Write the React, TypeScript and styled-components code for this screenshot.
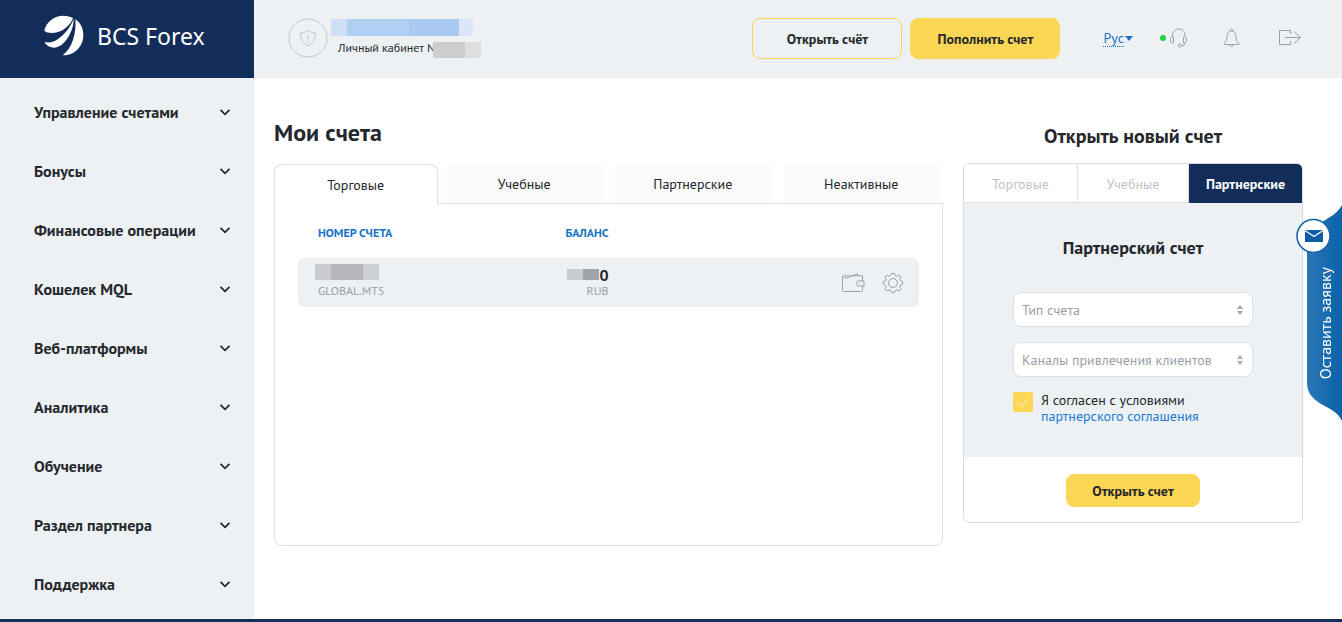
import React from "react";
import styled, { createGlobalStyle, css } from "styled-components";

const navy = "#122d5a";
const panel = "#edf1f4";
const yellow = "#fcd655";
const ink = "#25282c";
const link = "#1873c8";
const line = "#dde1e4";
const muted = "#9a9fa6";

const GlobalStyle = createGlobalStyle`
  *, *::before, *::after { box-sizing: border-box; }
  body {
    margin: 0;
    background: #fff;
    color: ${ink};
    font-family: "PT Sans", "Noto Sans", "Open Sans", sans-serif;
    font-size: 14px;
    line-height: 16px;
  }
  button, select, input { font: inherit; color: inherit; }
  h1, h2, h3, p, ul { margin: 0; padding: 0; }
  a { text-decoration: none; }
`;

const Page = styled.div`
  display: grid;
  grid-template-columns: 254px minmax(0, 1fr);
  grid-template-rows: 78px 1fr;
  min-height: 100vh;
  border-bottom: 3px solid #14305a;
`;

const Brand = styled.a`
  display: flex;
  align-items: center;
  gap: 13px;
  padding: 0 0 7px 44px;
  background: ${navy};
  color: #fff;
`;

const BrandName = styled.span`
  font-family: "Noto Sans", sans-serif;
  font-size: 23px;
  line-height: 28px;
  white-space: nowrap;
`;

const Header = styled.header`
  display: flex;
  align-items: center;
  padding: 0 40px 2px 34px;
  background: ${panel};
`;

const Account = styled.div`
  display: flex;
  align-items: center;
  gap: 3px;
  margin-right: auto;
`;

const AccountText = styled.div`
  display: flex;
  flex-direction: column;
  gap: 6px;
`;

const AccountLine = styled.div`
  display: flex;
  align-items: flex-start;
  padding-left: 7px;
  font-size: 12px;
  line-height: 12px;
  white-space: nowrap;

  > span { margin-left: -2px; }
`;

const Mask = styled.span<{ $w: number; $h: number; $fill: string }>`
  display: block;
  width: ${(p) => p.$w}px;
  height: ${(p) => p.$h}px;
  background: ${(p) => p.$fill};
`;

const HeaderButtons = styled.div`
  display: flex;
  gap: 8px;
  margin-right: 43px;
`;

const Button = styled.button<{ $outline?: boolean; $small?: boolean }>`
  width: ${(p) => (p.$small ? 134 : 150)}px;
  height: ${(p) => (p.$small ? 33 : 41)}px;
  padding: ${(p) => (p.$small ? 0 : 2)}px 0 0;
  border: 1px solid ${yellow};
  border-radius: 8px;
  background: ${(p) => (p.$outline ? "transparent" : yellow)};
  font-weight: 700;
  cursor: pointer;
`;

const Tools = styled.div`
  display: flex;
  align-items: center;
`;

const Language = styled.button`
  display: flex;
  align-items: center;
  gap: 1px;
  padding: 0;
  border: 0;
  background: none;
  color: ${link};
  margin-right: 27px;
  cursor: pointer;

  span { border-bottom: 1px dotted ${link}; }
`;

const ToolButton = styled.button<{ $gap?: number }>`
  display: flex;
  align-items: center;
  padding: 0;
  margin-right: ${(p) => p.$gap ?? 0}px;
  border: 0;
  background: none;
  color: #98a1ab;
  cursor: pointer;
`;

const OnlineDot = styled.i`
  width: 6px;
  height: 6px;
  margin-right: 3px;
  border-radius: 50%;
  background: #22d044;
`;

const Sidebar = styled.nav`
  background: ${panel};
  padding: 4px 0;
`;

const Menu = styled.ul`
  list-style: none;
`;

const MenuButton = styled.button`
  display: flex;
  align-items: center;
  justify-content: space-between;
  width: 100%;
  height: 59px;
  padding: 0 23px 0 34px;
  border: 0;
  background: none;
  font-size: 16px;
  font-weight: 700;
  text-align: left;
  cursor: pointer;
`;

const Main = styled.main`
  display: grid;
  grid-template-columns: minmax(0, 1fr) 340px;
  align-items: start;
  gap: 20px;
  padding: 39px 39px 20px 20px;
`;

const PageTitle = styled.h1`
  height: 47px;
  font-size: 24px;
  line-height: 32px;
`;

const AccountTabs = styled.div`
  display: grid;
  grid-template-columns: repeat(4, minmax(0, 1fr));
  gap: 5px;
`;

const AccountTab = styled.button<{ $active?: boolean }>`
  height: 39px;
  padding: 0;
  border: 1px solid transparent;
  border-bottom: 0;
  border-radius: 8px 8px 0 0;
  background: linear-gradient(90deg, #fff 1%, #fafafa 3%, #fafafa 97%, #fff 99%);
  cursor: pointer;
  ${(p) =>
    p.$active &&
    css`
      position: relative;
      height: 40px;
      margin-bottom: -1px;
      border-color: ${line};
      background: #fff;
    `}
`;

const AccountsPanel = styled.div`
  min-height: 343px;
  padding: 0 23px;
  border: 1px solid ${line};
  border-radius: 0 0 8px 8px;
`;

const AccountsTable = styled.table`
  width: 100%;
  border-collapse: separate;
  border-spacing: 0;
  table-layout: fixed;
`;

const HeadCell = styled.th<{ $right?: boolean }>`
  height: 54px;
  padding: 3px 0 0 ${(p) => (p.$right ? 0 : 20)}px;
  color: ${link};
  font-size: 12px;
  text-align: ${(p) => (p.$right ? "right" : "left")};
`;

const Cell = styled.td<{ $first?: boolean; $last?: boolean; $right?: boolean }>`
  height: 49px;
  padding: 0 ${(p) => (p.$last ? 15 : 0)}px 0 ${(p) => (p.$first ? 17 : 0)}px;
  border-radius: ${(p) => (p.$first ? "6px 0 0 6px" : p.$last ? "0 6px 6px 0" : "0")};
  background: ${panel};
  text-align: ${(p) => (p.$right ? "right" : "left")};
`;

const AccountNumber = styled.div`
  display: grid;
  gap: 3px;
  padding-bottom: 2px;
`;

const Amount = styled.div`
  display: flex;
  align-items: center;
  justify-content: flex-end;
  font-size: 16px;
  font-weight: 700;
`;

const Note = styled.div<{ $indent?: boolean }>`
  padding-left: ${(p) => (p.$indent ? 3 : 0)}px;
  color: ${muted};
  font-size: 12px;
`;

const RowActions = styled.div`
  display: flex;
  justify-content: flex-end;
  gap: 17px;
`;

const AsideTitle = styled.h2`
  height: 46px;
  padding-top: 3px;
  font-size: 20px;
  line-height: 32px;
  text-align: center;
`;

const FormCard = styled.form`
  overflow: hidden;
  border: 1px solid #d6dde2;
  border-radius: 6px;
`;

const FormTabs = styled.div`
  display: grid;
  grid-template-columns: 114px 111px 1fr;
  margin: -1px -1px 0 0;
`;

const FormTab = styled.button<{ $active?: boolean }>`
  height: 40px;
  padding: 1px 0 0;
  border: 0;
  border-top: 1px solid #d6dde2;
  border-right: 1px solid ${line};
  border-bottom: 1px solid ${line};
  background: #fff;
  color: #bfc4c9;
  cursor: pointer;
  ${(p) =>
    p.$active &&
    css`
      border-color: ${navy};
      background: ${navy};
      color: #fff;
      font-weight: 700;
    `}
`;

const FormBody = styled.div`
  display: flex;
  flex-direction: column;
  gap: 15px;
  height: 254px;
  padding: 33px 49px 0;
  background: ${panel};
`;

const FormTitle = styled.h3`
  margin-bottom: 17px;
  font-size: 18px;
  line-height: 24px;
  text-align: center;
`;

const SelectBox = styled.label`
  display: grid;
  align-items: center;

  select, svg { grid-area: 1 / 1; }
  svg { justify-self: end; margin-right: 10px; pointer-events: none; }
`;

const Select = styled.select`
  appearance: none;
  width: 100%;
  height: 35px;
  padding: 1px 24px 0 8px;
  border: 1px solid ${line};
  border-radius: 8px;
  background: #fff;
  color: ${muted};
`;

const Agreement = styled.div`
  display: flex;
  gap: 8px;
`;

const AgreementLabel = styled.label`
  display: block;
`;

const CheckWrap = styled.span`
  display: grid;
  height: 20px;

  input, svg { grid-area: 1 / 1; }
  svg { pointer-events: none; }
`;

const Check = styled.input`
  appearance: none;
  width: 20px;
  height: 20px;
  margin: 0;
  border-radius: 2px;
  background: ${yellow};
`;

const AgreementLink = styled.a`
  display: block;
  color: #1d7ad6;
`;

const FormFooter = styled.div`
  display: flex;
  justify-content: center;
  padding: 17px 0 15px;
`;

const Request = styled.button`
  position: fixed;
  top: 205px;
  right: 0;
  width: 46px;
  height: 216px;
  padding: 0;
  border: 0;
  background: none;
  color: #fff;
  cursor: pointer;

  svg { display: block; }
`;

const RequestLabel = styled.span`
  position: absolute;
  top: 62px;
  right: 7px;
  writing-mode: vertical-rl;
  transform: rotate(180deg);
  font-size: 16px;
  line-height: 20px;
  white-space: nowrap;
`;

const Logo = () => (
  <svg width="40" height="41" viewBox="0 0 120 123" fill="#fff" aria-hidden="true">
    <path d="M1 47C8 18 32 2 58 2c12 0 22 3 29 7C82 24 66 44 42 51 24 56 8 54 1 47z" />
    <path d="M89 12C90 42 66 95 32 98 17 98 6 91 2 81c12 3 25 1 37-7 22-14 38-34 50-62z" />
    <path d="M94 13c15 9 24 27 24 47 0 35-27 62-62 61C82 102 98 60 94 13z" />
  </svg>
);

const Shield = () => (
  <svg width="40" height="40" viewBox="0 0 40 40" fill="none" stroke="#c3c6c9" aria-hidden="true">
    <circle cx="20" cy="20" r="19" />
    <path d="M20 12.500c-2 1.700-4.500 2.300-7.500 2.300 0 6 2 10.200 7.500 13 5.500-2.800 7.500-7 7.500-13-3 0-5.500-.6-7.500-2.300z" />
    <path d="M20 16.500v5.500M20 23.500v1" />
  </svg>
);

const Chevron = () => (
  <svg width="12" height="8" viewBox="0 0 12 8" fill="none" stroke={ink} strokeWidth="1.8" aria-hidden="true">
    <path d="M1.500 1.800L6 6.300l4.500-4.500" />
  </svg>
);

const Headset = () => (
  <svg width="20" height="20" viewBox="0 0 20 20" fill="none" stroke="currentColor" aria-hidden="true">
    <path d="M3.500 9V7.500C3.500 3.500 6 1 9.800 1S16 3.500 16 7.500V9" />
    <path d="M4.500 9v6h-1C2 15 1.500 13.700 1.500 12S2 9 3.500 9zM14.500 9v6h1c1.500 0 2-1.300 2-3s-.5-3-2-3z" />
    <path d="M16 15c0 2-1.500 2.700-3.500 2.700" />
    <circle cx="10.800" cy="17.500" r="1.700" />
  </svg>
);

const Bell = () => (
  <svg width="17" height="20" viewBox="0 0 17 20" fill="none" stroke="currentColor" aria-hidden="true">
    <path d="M8.500 3C5.500 3 4 5.500 4 8.500c0 4-1 5-2.800 6.500v1.500h14.600V15C14 13.500 13 12.500 13 8.500 13 5.500 11.500 3 8.500 3z" />
    <path d="M7.200 3c-.5-2.500 3.100-2.500 2.600 0M6.500 16.500c0 2.700 4 2.700 4 0" />
  </svg>
);

const Exit = () => (
  <svg width="24" height="16" viewBox="0 0 24 16" fill="none" stroke="currentColor" aria-hidden="true">
    <path d="M12.500 4V.500h-11v14h11V11M7 7.500h15M16 1.500l6.500 6-6.500 6" />
  </svg>
);

const Wallet = () => (
  <svg width="23" height="20" viewBox="0 0 23 20" fill="none" stroke="#98a1ad" aria-hidden="true">
    <path d="M20.500 8V2.800H2.200c-1 0-1.700.3-1.700 1.200v13.500c0 .6.400 1 1 1h18c.6 0 1-.4 1-1V13" />
    <path d="M1 3.500C1.500 4.500 3 5 4.500 5L15.500.8l1 1.900" />
    <path d="M22 8h-5.500C15 8 14.500 9 14.500 10.500S15 13 16.500 13H22zM17 10.500h1" />
  </svg>
);

const Gear = () => (
  <svg width="22" height="22" viewBox="0 0 22 22" fill="none" stroke="#98a1ad" aria-hidden="true">
    <circle cx="11" cy="11" r="4.500" />
    <path
      strokeLinejoin="round"
      d="M9.700 1.300h2.600Q12.500 4 14.400 4T17.300 3L19 4.700Q17.500 6.500 18 7.800T20.700 9.700v2.600Q18 12.500 18 14.400T19 17.300L17.300 19Q15.500 17.500 14.200 18T12.300 20.700H9.700Q9.500 18 7.600 18T4.700 19L3 17.300Q4.500 15.500 4 14.200T1.300 12.300V9.700Q4 9.500 4 7.600T3 4.700L4.700 3Q6.500 4.500 7.800 4T9.700 1.300z"
    />
  </svg>
);

const Sort = () => (
  <svg width="6" height="10" viewBox="0 0 6 10" fill="#a7abb0" aria-hidden="true">
    <path d="M0 4l3-4 3 4zM0 6h6l-3 4z" />
  </svg>
);

const Tick = () => (
  <svg width="20" height="20" viewBox="0 0 20 20" fill="none" stroke="#ffe894" strokeWidth="1.500" aria-hidden="true">
    <path d="M4 10.500l4 4 8-8" />
  </svg>
);

const RequestShape = () => (
  <svg width="46" height="216" viewBox="0 0 46 216" aria-hidden="true">
    <defs>
      <linearGradient id="request" x1="0" x2="1">
        <stop offset="0" stopColor="#2a77b8" />
        <stop offset="1" stopColor="#0a62a8" />
      </linearGradient>
    </defs>
    <path fill="url(#request)" d="M46 0C42 8 34 12 26 17 16 22 11 28 11 40V178c0 10 6 16 14 21 9 5 17 8 21 17z" />
    <circle cx="17.500" cy="31" r="16.500" fill="#fff" stroke="#1767a8" strokeWidth="1.600" />
    <path fill="#0f5ea3" d="M9 25h18v12H9z" />
    <path fill="none" stroke="#fff" strokeWidth="1.300" d="M9 25.500l9 6 9-6" />
  </svg>
);

const menu = [
  "Управление счетами",
  "Бонусы",
  "Финансовые операции",
  "Кошелек MQL",
  "Веб-платформы",
  "Аналитика",
  "Обучение",
  "Раздел партнера",
  "Поддержка",
];

const accountTabs = ["Торговые", "Учебные", "Партнерские", "Неактивные"];
const formTabs = ["Торговые", "Учебные", "Партнерские"];

export default function App() {
  return (
    <>
      <GlobalStyle />
      <Page>
        <Brand href="#">
          <Logo />
          <BrandName>BCS Forex</BrandName>
        </Brand>

        <Header>
          <Account>
            <Shield />
            <AccountText>
              <Mask
                $w={142}
                $h={17}
                $fill="linear-gradient(90deg, #cfe0f6 0 16px, #b1cff3 16px 78px, #a9c9f2 78px 128px, #dbe7f6 128px)"
              />
              <AccountLine>
                Личный кабинет N
                <Mask $w={48} $h={16} $fill="linear-gradient(90deg, #cccdcf 0 32px, #dcdee0 32px)" />
              </AccountLine>
            </AccountText>
          </Account>
          <HeaderButtons>
            <Button type="button" $outline>Открыть счёт</Button>
            <Button type="button">Пополнить счет</Button>
          </HeaderButtons>
          <Tools>
            <Language type="button">
              <span>Рус</span>
              <svg width="8" height="5" viewBox="0 0 8 5" fill={link} aria-hidden="true">
                <path d="M0 0h8L4 5z" />
              </svg>
            </Language>
            <ToolButton type="button" aria-label="Чат" $gap={34}>
              <OnlineDot />
              <Headset />
            </ToolButton>
            <ToolButton type="button" aria-label="Уведомления" $gap={38}>
              <Bell />
            </ToolButton>
            <ToolButton type="button" aria-label="Выход">
              <Exit />
            </ToolButton>
          </Tools>
        </Header>

        <Sidebar>
          <Menu>
            {menu.map((item) => (
              <li key={item}>
                <MenuButton type="button">
                  {item}
                  <Chevron />
                </MenuButton>
              </li>
            ))}
          </Menu>
        </Sidebar>

        <Main>
          <section>
            <PageTitle>Мои счета</PageTitle>
            <AccountTabs role="tablist">
              {accountTabs.map((tab, i) => (
                <AccountTab key={tab} type="button" role="tab" aria-selected={i === 0} $active={i === 0}>
                  {tab}
                </AccountTab>
              ))}
            </AccountTabs>
            <AccountsPanel>
              <AccountsTable>
                <thead>
                  <tr>
                    <HeadCell scope="col">НОМЕР СЧЕТА</HeadCell>
                    <HeadCell scope="col" $right>БАЛАНС</HeadCell>
                    <td colSpan={2} />
                  </tr>
                </thead>
                <tbody>
                  <tr>
                    <Cell $first>
                      <AccountNumber>
                        <Mask
                          $w={64}
                          $h={16}
                          $fill="linear-gradient(90deg, #c9cbce 0 16px, #b6b8bc 16px 48px, #cdd0d3 48px)"
                        />
                        <Note $indent>GLOBAL.MT5</Note>
                      </AccountNumber>
                    </Cell>
                    <Cell $right>
                      <Amount>
                        <Mask $w={32} $h={11} $fill="linear-gradient(90deg, #c9cbcf 0 16px, #a0a3aa 16px)" />0
                      </Amount>
                      <Note>RUB</Note>
                    </Cell>
                    <Cell $last colSpan={2}>
                      <RowActions>
                        <ToolButton type="button" aria-label="Кошелек"><Wallet /></ToolButton>
                        <ToolButton type="button" aria-label="Настройки"><Gear /></ToolButton>
                      </RowActions>
                    </Cell>
                  </tr>
                </tbody>
              </AccountsTable>
            </AccountsPanel>
          </section>

          <aside>
            <AsideTitle>Открыть новый счет</AsideTitle>
            <FormCard>
              <FormTabs role="tablist">
                {formTabs.map((tab, i) => (
                  <FormTab key={tab} type="button" role="tab" aria-selected={i === 2} $active={i === 2}>
                    {tab}
                  </FormTab>
                ))}
              </FormTabs>
              <FormBody>
                <FormTitle>Партнерский счет</FormTitle>
                <SelectBox>
                  <Select aria-label="Тип счета">
                    <option>Тип счета</option>
                  </Select>
                  <Sort />
                </SelectBox>
                <SelectBox>
                  <Select aria-label="Каналы привлечения клиентов">
                    <option>Каналы привлечения клиентов</option>
                  </Select>
                  <Sort />
                </SelectBox>
                <Agreement>
                  <CheckWrap>
                    <Check id="agree" type="checkbox" defaultChecked />
                    <Tick />
                  </CheckWrap>
                  <div>
                    <AgreementLabel htmlFor="agree">Я согласен с условиями</AgreementLabel>
                    <AgreementLink href="#">партнерского соглашения</AgreementLink>
                  </div>
                </Agreement>
              </FormBody>
              <FormFooter>
                <Button type="submit" $small>Открыть счет</Button>
              </FormFooter>
            </FormCard>
          </aside>
        </Main>

        <Request type="button">
          <RequestShape />
          <RequestLabel>Оставить заявку</RequestLabel>
        </Request>
      </Page>
    </>
  );
}
